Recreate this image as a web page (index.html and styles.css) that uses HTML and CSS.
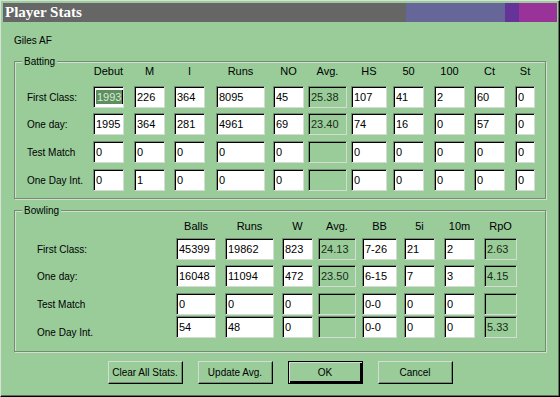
FILE: index.html
```html
<!DOCTYPE html>
<html lang="en">
<head>
    <meta charset="UTF-8">
    <title>Player Stats</title>
    <link rel="stylesheet" href="styles.css">
</head>
<body>
    <div class="dialog">
        <div class="titlebar">Player Stats</div>
        <div class="player">Giles AF</div>

        <div class="group">
            <div class="group-title">Batting</div>
            <div class="grid batting">
                <div></div>
                <div class="hd w31">Debut</div>
                <div class="hd w31">M</div>
                <div class="hd w31">I</div>
                <div class="hd w49">Runs</div>
                <div class="hd w31">NO</div>
                <div class="hd w39">Avg.</div>
                <div class="hd w36">HS</div>
                <div class="hd w31">50</div>
                <div class="hd w31">100</div>
                <div class="hd w31">Ct</div>
                <div class="hd w20">St</div>

                <div class="lbl">First Class:</div>
                <div class="fld w31"><span class="sel">1993</span></div>
                <div class="fld w31">226</div>
                <div class="fld w31">364</div>
                <div class="fld w49">8095</div>
                <div class="fld w31">45</div>
                <div class="fld off w39">25.38</div>
                <div class="fld w36">107</div>
                <div class="fld w31">41</div>
                <div class="fld w31">2</div>
                <div class="fld w31">60</div>
                <div class="fld w20">0</div>

                <div class="lbl">One day:</div>
                <div class="fld w31">1995</div>
                <div class="fld w31">364</div>
                <div class="fld w31">281</div>
                <div class="fld w49">4961</div>
                <div class="fld w31">69</div>
                <div class="fld off w39">23.40</div>
                <div class="fld w36">74</div>
                <div class="fld w31">16</div>
                <div class="fld w31">0</div>
                <div class="fld w31">57</div>
                <div class="fld w20">0</div>

                <div class="lbl">Test Match</div>
                <div class="fld w31">0</div>
                <div class="fld w31">0</div>
                <div class="fld w31">0</div>
                <div class="fld w49">0</div>
                <div class="fld w31">0</div>
                <div class="fld off w39"></div>
                <div class="fld w36">0</div>
                <div class="fld w31">0</div>
                <div class="fld w31">0</div>
                <div class="fld w31">0</div>
                <div class="fld w20">0</div>

                <div class="lbl">One Day Int.</div>
                <div class="fld w31">0</div>
                <div class="fld w31">1</div>
                <div class="fld w31">0</div>
                <div class="fld w49">0</div>
                <div class="fld w31">0</div>
                <div class="fld off w39"></div>
                <div class="fld w36">0</div>
                <div class="fld w31">0</div>
                <div class="fld w31">0</div>
                <div class="fld w31">0</div>
                <div class="fld w20">0</div>
            </div>
        </div>

        <div class="group bowl-group">
            <div class="group-title">Bowling</div>
            <div class="grid bowling">
                <div></div>
                <div class="hd w40">Balls</div>
                <div class="hd w49">Runs</div>
                <div class="hd w31">W</div>
                <div class="hd w38">Avg.</div>
                <div class="hd w35">BB</div>
                <div class="hd w31">5i</div>
                <div class="hd w31">10m</div>
                <div class="hd w33">RpO</div>

                <div class="lbl">First Class:</div>
                <div class="fld w40">45399</div>
                <div class="fld w49">19862</div>
                <div class="fld w31">823</div>
                <div class="fld off w38">24.13</div>
                <div class="fld w35">7-26</div>
                <div class="fld w31">21</div>
                <div class="fld w31">2</div>
                <div class="fld off w33">2.63</div>

                <div class="lbl">One day:</div>
                <div class="fld w40">16048</div>
                <div class="fld w49">11094</div>
                <div class="fld w31">472</div>
                <div class="fld off w38">23.50</div>
                <div class="fld w35">6-15</div>
                <div class="fld w31">7</div>
                <div class="fld w31">3</div>
                <div class="fld off w33">4.15</div>

                <div class="lbl">Test Match</div>
                <div class="fld w40">0</div>
                <div class="fld w49">0</div>
                <div class="fld w31">0</div>
                <div class="fld off w38"></div>
                <div class="fld w35">0-0</div>
                <div class="fld w31">0</div>
                <div class="fld w31">0</div>
                <div class="fld off w33"></div>

                <div class="lbl low">One Day Int.</div>
                <div class="fld w40">54</div>
                <div class="fld w49">48</div>
                <div class="fld w31">0</div>
                <div class="fld off w38"></div>
                <div class="fld w35">0-0</div>
                <div class="fld w31">0</div>
                <div class="fld w31">0</div>
                <div class="fld off w33">5.33</div>
            </div>
        </div>

        <div class="buttons">
            <button>Clear All Stats.</button>
            <button>Update Avg.</button>
            <button class="default">OK</button>
            <button>Cancel</button>
        </div>
    </div>
</body>
</html>
```

FILE: styles.css
```css
* {
    margin: 0;
    padding: 0;
    box-sizing: border-box;
}
body {
    background: #99cc99;
    font-family: "Liberation Sans", Arial, sans-serif;
    font-size: 10px;
    color: #000;
}
.dialog {
    width: 560px;
    height: 397px;
    padding: 2px;
    background: #99cc99;
    border: 1px solid;
    border-color: #d8e0d8 #000 #000 #d8e0d8;
    box-shadow: inset -1px -1px 0 #557755;
}
.titlebar {
    height: 19px;
    line-height: 19px;
    padding-left: 2px;
    font-family: "Liberation Serif", "Times New Roman", serif;
    font-weight: bold;
    font-size: 15px;
    color: #fff;
    background: linear-gradient(90deg,
        #666666 0, #666666 403px,
        #666699 403px, #666699 502px,
        #663399 502px, #663399 516px,
        #993399 516px);
}
.player {
    margin: 12px 0 0 11px;
    line-height: 13px;
}
.group {
    margin: 14px 11px 0;
    padding-bottom: 7px;
    border: 1px solid #6f8f6f;
    box-shadow: 1px 1px 0 #d4dcd4, inset 1px 1px 0 #d4dcd4;
}
.bowl-group {
    margin-top: 11px;
    padding-bottom: 13px;
}
.group-title {
    display: table;
    margin: -7px 0 0 7px;
    padding: 0 2px;
    line-height: 13px;
    background: #99cc99;
}
.grid {
    display: grid;
    align-items: start;
}
.batting {
    margin-top: -3px;
    padding-left: 12px;
    grid-template-columns: 66px 41px 40px 42px 57px 35px 43px 42px 41px 40px 41px 20px;
    grid-template-rows: 21px 27px 28px 28px 22px;
}
.bowling {
    margin-top: 3px;
    padding-left: 22px;
    grid-template-columns: 139px 49px 57px 36px 44px 42px 40px 40px 33px;
    grid-template-rows: 18px 27px 28px 23px 22px;
}
.hd {
    font-size: 11px;
    line-height: 13px;
    text-align: center;
}
.lbl {
    line-height: 22px;
    padding-top: 1px;
    white-space: nowrap;
}
.lbl.low {
    margin-top: 5px;
}
.fld {
    height: 22px;
    padding-left: 2px;
    font-size: 11px;
    line-height: 20px;
    background: #fff;
    border: 1px solid;
    border-color: #6f8f6f #d4dcd4 #d4dcd4 #6f8f6f;
    box-shadow: inset 1px 1px 0 #000;
    white-space: nowrap;
    overflow: hidden;
}
.fld.off {
    background: #99cc99;
    color: #1a2a1a;
}
.sel {
    display: inline-block;
    line-height: 14px;
    padding: 0 1px;
    background: #5f8f5f;
    color: #d8ecd8;
    border-right: 1px solid #000;
}
.w20 { width: 20px; }
.w31 { width: 31px; }
.w33 { width: 33px; }
.w35 { width: 35px; }
.w36 { width: 36px; }
.w38 { width: 38px; }
.w39 { width: 39px; }
.w40 { width: 40px; }
.w49 { width: 49px; }
.buttons {
    display: flex;
    justify-content: center;
    gap: 15px;
    margin-top: 9px;
}
button {
    width: 75px;
    height: 23px;
    font-family: "Liberation Sans", Arial, sans-serif;
    font-size: 10px;
    color: #000;
    background: #99cc99;
    border: 1px solid;
    border-color: #d4dcd4 #000 #000 #d4dcd4;
    box-shadow: inset -1px -1px 0 #6f8f6f;
}
button.default {
    border: 1px solid #000;
    box-shadow: inset 1px 1px 0 #d4dcd4, inset -2px -2px 0 #000;
}
```
